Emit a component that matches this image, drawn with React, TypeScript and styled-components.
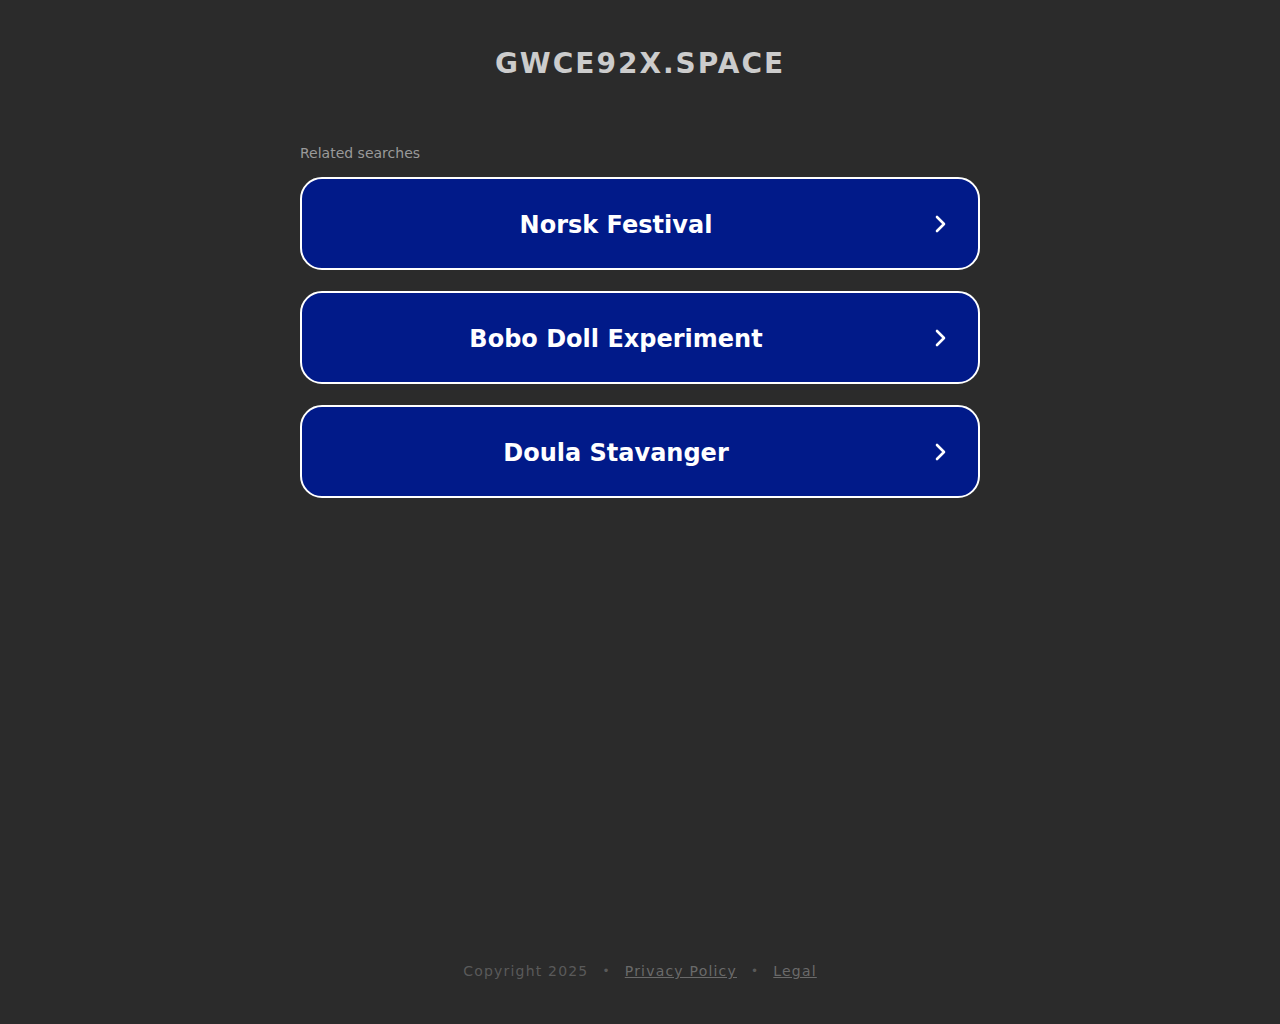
import styled, { createGlobalStyle } from "styled-components";

const GlobalStyle = createGlobalStyle`
	html, body {
		margin: 0;
		padding: 0;
		background: #2b2b2b;
		font-family: "DejaVu Sans", "Liberation Sans", sans-serif;
	}
`;

const searches = ["Norsk Festival", "Bobo Doll Experiment", "Doula Stavanger"];

const Chevron = () => (
	<svg width="24" height="24" viewBox="0 0 24 24" fill="none">
		<path d="M9 5l7 7-7 7" stroke="#ffffff" strokeWidth="2.6" strokeLinecap="round" strokeLinejoin="round" />
	</svg>
);

const App = () => {
	return (
		<Page>
			<GlobalStyle />
			<Title>GWCE92X.SPACE</Title>
			<Main>
				<Label>Related searches</Label>
				<List>
					{searches.map((s) => (
						<SearchLink key={s} href="#">
							<LinkText>{s}</LinkText>
							<Arrow>
								<Chevron />
							</Arrow>
						</SearchLink>
					))}
				</List>
			</Main>
			<Footer>
				<span>Copyright 2025</span>
				<Dot>•</Dot>
				<FooterLink href="#">Privacy Policy</FooterLink>
				<Dot>•</Dot>
				<FooterLink href="#">Legal</FooterLink>
			</Footer>
		</Page>
	);
};

export default App;

const Page = styled.div`
	min-height: 100vh;
	display: flex;
	flex-direction: column;
	align-items: center;
`;

const Title = styled.h1`
	margin: 46px 0 0;
	font-size: 28px;
	line-height: 36px;
	font-weight: bold;
	letter-spacing: 2px;
	color: #cccccc;
`;

const Main = styled.main`
	width: 680px;
	margin-top: 62px;
`;

const Label = styled.div`
	font-size: 14px;
	line-height: 18px;
	color: #9a9a9a;
	margin-bottom: 15px;
`;

const List = styled.div`
	display: flex;
	flex-direction: column;
	gap: 21px;
`;

const SearchLink = styled.a`
	display: flex;
	align-items: center;
	height: 93px;
	box-sizing: border-box;
	border: 2px solid #ffffff;
	border-radius: 22px;
	background: #011a89;
	text-decoration: none;
	color: #ffffff;
`;

const LinkText = styled.span`
	flex: 1;
	text-align: center;
	font-size: 24px;
	font-weight: bold;
	padding: 2px 0 0 2px;
`;

const Arrow = styled.span`
	display: flex;
	margin-right: 26px;
`;

const Footer = styled.footer`
	margin-top: auto;
	padding-bottom: 45px;
	display: flex;
	align-items: center;
	gap: 14px;
	font-size: 14px;
	letter-spacing: 1.2px;
	color: #5a5a5a;
`;

const Dot = styled.span`
	font-size: 12px;
`;

const FooterLink = styled.a`
	color: #6a6a6a;
	text-decoration: underline;
`;
